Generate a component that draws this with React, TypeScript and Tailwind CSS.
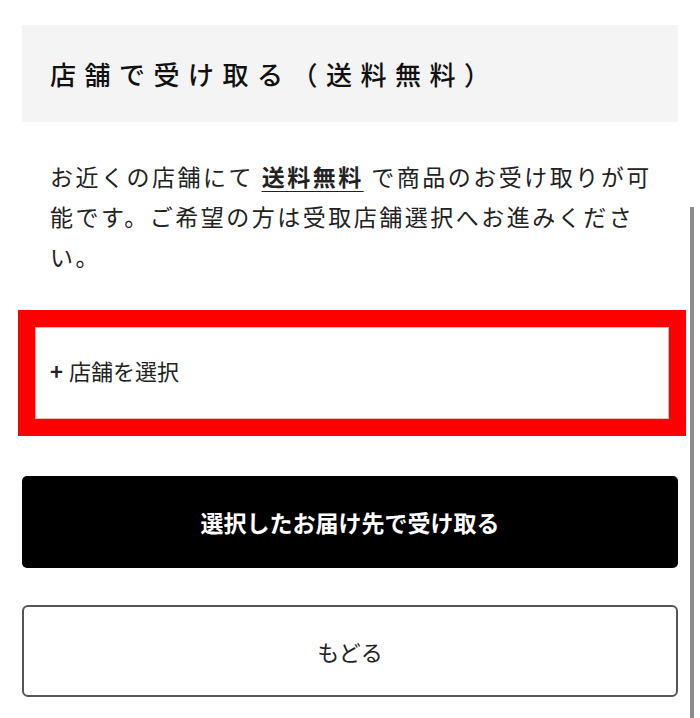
import React from "react";

const FONT = {
  fontFamily: '"Noto Sans CJK JP", "Noto Sans", sans-serif',
};

export default function App() {
  return (
    <div
      className="relative h-[718px] w-[700px] overflow-hidden bg-white text-[#1a1a1a]"
      style={FONT}
    >
      {/* scrollbar */}
      <div className="absolute right-[6px] top-[207px] bottom-0 w-[4px] bg-[#8c8c8c]" />

      <div className="flex flex-col px-[22px] pt-[25px]">
        <div className="flex h-[97px] items-center bg-[#f4f4f4] pl-[28px]">
          <h2 className="text-[26px] font-medium tracking-[8.5px] text-[#111]">
            店舗で受け取る（送料無料）
          </h2>
        </div>

        <p className="mt-[34px] w-[635px] pl-[28px] text-[23px] leading-[40px] tracking-[2.5px] text-[#222]">
          お近くの店舗にて{" "}
          <span className="font-bold underline underline-offset-[5px] decoration-[1px]">
            送料無料
          </span>{" "}
          で商品のお受け取りが可能です。ご希望の方は受取店舗選択へお進みください。
        </p>

        <div className="mt-[34px] ml-[-4px] mr-[-8px] border-[17px] border-[#ff0000]">
          <div className="flex h-[92px] items-center border border-[#f4b4b4] bg-white pb-[6px] pl-[14px] text-[22px] text-[#222]">
            <span className="mr-[6px] font-bold">+</span>
            <span>店舗を選択</span>
          </div>
        </div>

        <button className="mt-[40px] flex h-[92px] items-center justify-center rounded-[5px] bg-black text-[23px] font-bold text-white">
          選択したお届け先で受け取る
        </button>

        <button className="mt-[37px] flex h-[92px] items-center justify-center rounded-[6px] border-2 border-[#555] bg-white text-[22px] text-[#222]">
          もどる
        </button>
      </div>
    </div>
  );
}
